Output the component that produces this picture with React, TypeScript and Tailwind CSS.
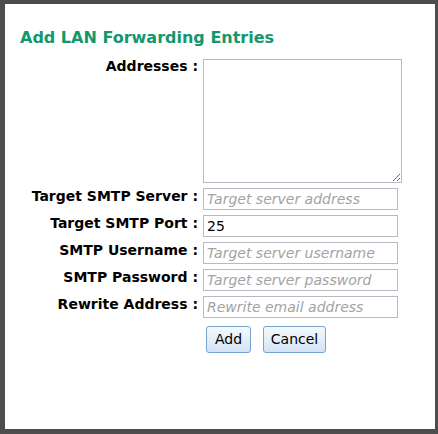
import { useState } from 'react';

const font = { fontFamily: '"DejaVu Sans", Verdana, sans-serif' };

const fields = [
  { label: 'Target SMTP Server :', placeholder: 'Target server address', value: '' },
  { label: 'Target SMTP Port :', placeholder: '', value: '25' },
  { label: 'SMTP Username :', placeholder: 'Target server username', value: '' },
  { label: 'SMTP Password :', placeholder: 'Target server password', value: '' },
  { label: 'Rewrite Address :', placeholder: 'Rewrite email address', value: '' },
];

export default function App() {
  const [values, setValues] = useState(fields.map((f) => f.value));
  const [addresses, setAddresses] = useState('');

  return (
    <div className="w-[438px] h-[434px] bg-[#4d4d4d] pt-[4px] pl-[5px]" style={font}>
      <div className="w-[430px] h-[425px] bg-white pl-[15px] pt-[23px]">
        {/* Title */}
        <h1 className="text-[16px] leading-[22px] font-bold text-[#12976f] mb-[10px]">
          Add LAN Forwarding Entries
        </h1>

        {/* Form */}
        <div className="grid grid-cols-[178px_auto] gap-x-[5px] gap-y-[5px] items-center">
          <label className="self-start text-right text-[14px] leading-[16px] font-bold text-black -mt-[1px]">
            Addresses :
          </label>
          <textarea
            value={addresses}
            onChange={(e) => setAddresses(e.target.value)}
            className="w-[199px] h-[124px] border border-[#b9bac1] bg-white outline-none block"
          />

          {fields.map((f, i) => (
            <div key={f.label} className="contents">
              <label className="text-right text-[14px] leading-[16px] font-bold text-black -mt-[7px]">
                {f.label}
              </label>
              <input
                type="text"
                value={values[i]}
                placeholder={f.placeholder}
                onChange={(e) => {
                  const next = [...values];
                  next[i] = e.target.value;
                  setValues(next);
                }}
                className="w-[195px] h-[22px] border border-[#b9bac1] px-[3px] text-[14px] text-black placeholder:italic placeholder:text-[#a3a3a3] outline-none block"
                style={font}
              />
            </div>
          ))}

          <div />
          <div className="flex gap-[12px] pl-[3px] pt-[3px]">
            <button
              className="w-[45px] h-[27px] rounded-[3px] border border-[#79a2cd] bg-gradient-to-b from-[#f6f9fd] to-[#d3e3f4] text-[14px] text-black"
              style={font}
            >
              Add
            </button>
            <button
              className="w-[63px] h-[27px] rounded-[3px] border border-[#79a2cd] bg-gradient-to-b from-[#f6f9fd] to-[#d3e3f4] text-[14px] text-black"
              style={font}
            >
              Cancel
            </button>
          </div>
        </div>
      </div>
    </div>
  );
}
